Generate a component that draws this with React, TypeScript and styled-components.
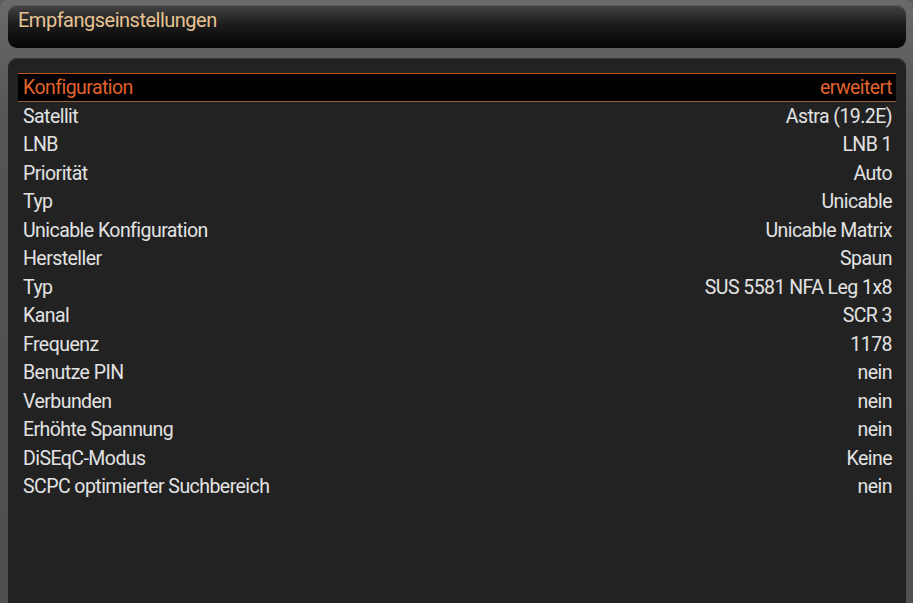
import styled, { createGlobalStyle } from 'styled-components';

const GlobalStyle = createGlobalStyle`
  html, body {
    margin: 0;
    padding: 0;
    background: #5c5c5c;
  }
  body {
    font-family: Roboto, 'Liberation Sans', sans-serif;
  }
`;

const Screen = styled.div`
  width: 913px;
  height: 603px;
  box-sizing: border-box;
  padding: 5px 7px 0 8px;
  display: flex;
  flex-direction: column;
  gap: 10px;
  overflow: hidden;
  background: linear-gradient(to bottom, #6a6a6a 0%, #555 20%, #4f4f4f 100%);
  border-radius: 8px 8px 0 0;
`;

const TitleBar = styled.div`
  height: 43px;
  flex: none;
  border-radius: 9px;
  background: linear-gradient(to bottom, #454545 0%, #1c1c1c 45%, #040404 100%);
  box-shadow: inset 0 1px 0 #5e5e5e;
  padding: 3px 10px 0;
  box-sizing: border-box;
`;

const Title = styled.div`
  color: #e7c392;
  font-size: 20px;
  letter-spacing: -0.5px;
`;

const Panel = styled.div`
  flex: 1;
  background: #222;
  border-radius: 9px 9px 0 0;
  box-shadow: inset 0 1px 0 #3a3a3a;
  padding: 15px 10px 0 10px;
`;

const List = styled.div`
  display: flex;
  flex-direction: column;
`;

const Row = styled.div<{ $selected?: boolean }>`
  height: 28.5px;
  box-sizing: border-box;
  display: flex;
  justify-content: space-between;
  align-items: center;
  padding: 1px 4px 0 5px;
  font-size: 19.5px;
  letter-spacing: -0.55px;
  color: ${(p) => (p.$selected ? '#e0622c' : '#e2e2e2')};
  background: ${(p) => (p.$selected ? '#000' : 'transparent')};
  border-top: 1px solid ${(p) => (p.$selected ? '#c0581f' : 'transparent')};
  border-bottom: 1px solid ${(p) => (p.$selected ? '#9a5a35' : 'transparent')};
`;

const rows: [string, string][] = [
  ['Konfiguration', 'erweitert'],
  ['Satellit', 'Astra (19.2E)'],
  ['LNB', 'LNB 1'],
  ['Priorität', 'Auto'],
  ['Typ', 'Unicable'],
  ['Unicable Konfiguration', 'Unicable Matrix'],
  ['Hersteller', 'Spaun'],
  ['Typ', 'SUS 5581 NFA Leg 1x8'],
  ['Kanal', 'SCR 3'],
  ['Frequenz', '1178'],
  ['Benutze PIN', 'nein'],
  ['Verbunden', 'nein'],
  ['Erhöhte Spannung', 'nein'],
  ['DiSEqC-Modus', 'Keine'],
  ['SCPC optimierter Suchbereich', 'nein'],
];

const App = () => {
  return (
    <>
      <GlobalStyle />
      <Screen>
        <TitleBar>
          <Title>Empfangseinstellungen</Title>
        </TitleBar>
        <Panel>
          <List>
            {rows.map(([label, value], i) => (
              <Row key={i} $selected={i === 0}>
                <span>{label}</span>
                <span>{value}</span>
              </Row>
            ))}
          </List>
        </Panel>
      </Screen>
    </>
  );
};

export default App;
